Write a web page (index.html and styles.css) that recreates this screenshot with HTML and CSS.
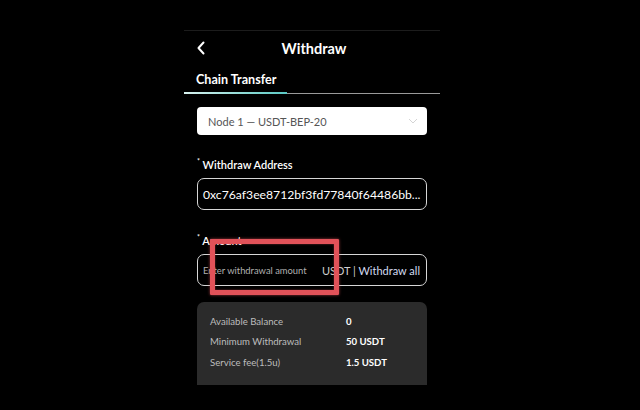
FILE: index.html
```html
<!DOCTYPE html>
<html>
<head>
<meta charset="utf-8">
<link rel="stylesheet" href="styles.css">
</head>
<body>
<div class="screen">
  <div class="topline"></div>
  <div class="header">
    <svg class="back" width="10" height="14" viewBox="0 0 10 14"><path d="M7.5 1.5 L2.5 7 L7.5 12.5" fill="none" stroke="#fff" stroke-width="2" stroke-linecap="round" stroke-linejoin="round"/></svg>
    <div class="title">Withdraw</div>
  </div>
  <div class="tabs">
    <div class="tab">Chain Transfer</div>
    <div class="tabline"><span class="active"></span><span class="rest"></span></div>
  </div>
  <div class="form">
    <div class="select">
      <span>Node 1 — USDT-BEP-20</span>
      <svg width="10" height="6" viewBox="0 0 10 6"><path d="M1 1 L5 5 L9 1" fill="none" stroke="#d4d4d4" stroke-width="1"/></svg>
    </div>
    <div class="label"><sup>*</sup> Withdraw Address</div>
    <div class="input address">0xc76af3ee8712bf3fd77840f64486bb...</div>
    <div class="label amount-label"><sup>*</sup> Amount</div>
    <div class="input amount">
      <span class="placeholder">Enter withdrawal amount</span>
      <span class="suffix"><span class="unit">USDT</span> <span class="sep">|</span> <span class="all">Withdraw all</span></span>
      <div class="highlight"></div>
    </div>
    <div class="card">
      <div class="row"><span class="k">Available Balance</span><span class="v">0</span></div>
      <div class="row"><span class="k">Minimum Withdrawal</span><span class="v">50 USDT</span></div>
      <div class="row"><span class="k">Service fee(1.5u)</span><span class="v">1.5 USDT</span></div>
    </div>
  </div>
</div>
</body>
</html>
```
FILE: styles.css
```css
html, body {
  margin: 0;
  padding: 0;
  background: #000;
  height: 410px;
  overflow: hidden;
  font-family: Lato, "Open Sans", "Noto Sans", sans-serif;
  color: #fff;
}
.screen {
  width: 256px;
  margin-left: 184px;
  padding-top: 30px;
}
.topline {
  height: 1px;
  background: #1c1c1c;
}
.header {
  position: relative;
  height: 35px;
  display: flex;
  align-items: center;
  justify-content: center;
}
.back {
  position: absolute;
  left: 12px;
  top: 10px;
}
.title {
  font-size: 14.5px;
  font-weight: 700;
  padding-left: 4px;
}
.tabs {
  padding-top: 5px;
}
.tab {
  font-size: 12.6px;
  font-weight: 700;
  padding-left: 12px;
  height: 21px;
  line-height: 18px;
}
.tabline {
  display: flex;
  align-items: flex-end;
  height: 2px;
}
.tabline .active {
  width: 103px;
  height: 2px;
  background: linear-gradient(90deg, #d8f2ef, #7fd6d0 70%, #5ac8c4);
}
.tabline .rest {
  flex: 1;
  height: 1px;
  background: #9a9a9a;
}
.form {
  padding: 13px 13px 0 13px;
}
.select {
  height: 28px;
  background: #fff;
  border-radius: 4px;
  display: flex;
  align-items: center;
  justify-content: space-between;
  padding: 0 9px 0 11px;
  font-size: 11px;
  color: #555;
}
.label {
  margin-top: 21px;
  height: 17px;
  font-size: 11px;
  font-weight: 600;
  line-height: 17px;
}
.label sup {
  font-size: 7px;
  vertical-align: 5px;
  line-height: 0;
}
.input {
  margin-top: 5px;
  height: 30px;
  border: 1px solid #d6d6d6;
  border-radius: 7px;
  display: flex;
  align-items: center;
  padding: 0 5px;
}
.address {
  font-size: 12.2px;
  white-space: nowrap;
  overflow: hidden;
}
.amount-label {
  margin-top: 22px;
}
.amount {
  position: relative;
  justify-content: space-between;
  padding-right: 6px;
}
.placeholder {
  font-size: 9.4px;
  color: #b0b0b0;
}
.suffix {
  font-size: 11px;
  white-space: nowrap;
}
.unit { color: #cfcfcf; }
.sep { color: #d0d0d0; }
.all { color: #d3dbf1; }
.highlight {
  position: absolute;
  left: 12px;
  top: -16px;
  width: 119px;
  height: 46px;
  border: 5px solid #e15259;
  box-shadow: 0 0 3px rgba(225, 82, 89, 0.7), inset 0 0 2px rgba(225, 82, 89, 0.6);
  border-radius: 1px;
}
.card {
  margin-top: 16px;
  height: 83px;
  background: #2b2b2b;
  border-radius: 7px 7px 0 0;
  padding: 9px 13px 0 13px;
  box-sizing: border-box;
}
.row {
  display: flex;
  height: 20.5px;
  align-items: center;
  font-size: 9.6px;
}
.row .k {
  width: 136px;
  color: #bdbdbd;
}
.row .v {
  color: #fff;
  font-weight: 700;
}
```
